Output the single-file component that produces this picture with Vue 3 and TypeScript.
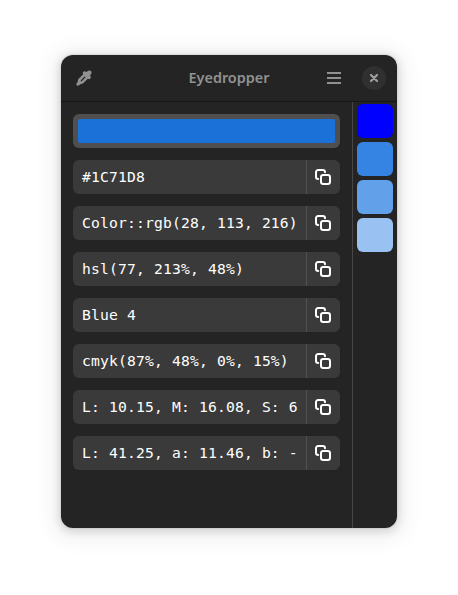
<script setup lang="ts">
interface ColorFormat {
  id: string
  value: string
}

const formats: ColorFormat[] = [
  { id: 'hex', value: '#1C71D8' },
  { id: 'rgb', value: 'Color::rgb(28, 113, 216)' },
  { id: 'hsl', value: 'hsl(77, 213%, 48%)' },
  { id: 'name', value: 'Blue 4' },
  { id: 'cmyk', value: 'cmyk(87%, 48%, 0%, 15%)' },
  { id: 'lms', value: 'L: 10.15, M: 16.08, S: 6' },
  { id: 'hunter', value: 'L: 41.25, a: 11.46, b: -' },
]

const history: string[] = ['#0000ff', '#3584e4', '#62a0ea', '#99c1f1']
</script>

<template>
  <main class="desktop">
    <section class="window">
      <header class="headerbar">
        <button class="flat pick" aria-label="Pick a color">
          <svg width="16" height="16" viewBox="0 0 16 16">
            <path
              class="fill"
              fill-rule="evenodd"
              d="M10.8 1.7C12 .3 13.9 0 15 1C16 2.1 15.7 3.9 14.4 5.1L13.9 5.6C15 6.6 15.1 7.8 14.3 8.6C13.6 9.3 12.6 9.3 11.8 8.8L7.5 13.1C6.6 14 5.5 14.3 4.3 14.2L3.1 15.3C2.4 15.9 1.4 15.9 .8 15.2C.1 14.6 .1 13.6 .8 12.9L1.8 11.9C1.7 10.5 2 9.4 2.9 8.5L7.2 4.2C6.6 3.4 6.7 2.4 7.4 1.7C8.2 1 9.3 1.1 10.3 2.1ZM8.6 6.5L5.2 9.9C4.6 10.5 4.5 11 4.8 11.2C5.1 11.4 5.6 11.3 6.1 10.8L9.6 7.3Z"
            />
          </svg>
        </button>
        <h1 class="title">Eyedropper</h1>
        <div class="controls">
          <button class="flat" aria-label="Main menu">
            <svg width="16" height="16" viewBox="0 0 16 16">
              <path class="fill" d="M1 2h14v2H1zM1 7h14v2H1zM1 12h14v2H1z" />
            </svg>
          </button>
          <button class="close" aria-label="Close">
            <svg width="16" height="16" viewBox="0 0 16 16">
              <path class="cross" d="M5 5l6 6M11 5l-6 6" />
            </svg>
          </button>
        </div>
      </header>
      <div class="body">
        <div class="content">
          <button class="current" aria-label="Current color"><span class="fillcolor"></span></button>
          <div v-for="format in formats" :key="format.id" class="entry">
            <span class="value">{{ format.value }}</span>
            <button class="copy" aria-label="Copy">
              <svg width="16" height="16" viewBox="0 0 16 16">
                <path d="M3.2 10A2.2 2.2 0 0 1 1 7.8V3.2A2.2 2.2 0 0 1 3.2 1h4.6A2.2 2.2 0 0 1 10 3.2" />
                <rect x="6" y="6" width="9" height="9" rx="2.2" />
              </svg>
            </button>
          </div>
        </div>
        <aside class="history">
          <button
            v-for="color in history"
            :key="color"
            class="swatch"
            :style="{ backgroundColor: color }"
            :aria-label="color"
          ></button>
        </aside>
      </div>
    </section>
  </main>
</template>

<style>
body {
  background: #fff;
}
</style>

<style scoped>
.desktop {
  box-sizing: border-box;
  height: 595px;
  padding: 55px 61px 67px;
  overflow: hidden;
}

.window {
  display: flex;
  flex-direction: column;
  height: 473px;
  border-radius: 12px;
  overflow: hidden;
  background: #242424;
  box-shadow:
    0 2px 8px 2px rgba(0, 0, 0, 0.13),
    0 3px 20px 10px rgba(0, 0, 0, 0.05),
    0 0 0 1px rgba(0, 0, 0, 0.05);
}

button {
  display: flex;
  align-items: center;
  justify-content: center;
  padding: 0;
  border: 0;
  background: none;
}

svg {
  display: block;
}

.headerbar {
  display: grid;
  grid-template-columns: 1fr auto 1fr;
  align-items: center;
  box-sizing: border-box;
  height: 47px;
  padding: 0 11px 0 6px;
  border-bottom: 1px solid #171717;
}

.flat {
  width: 34px;
  height: 34px;
}

.title {
  margin: 0 0 0 5px;
  color: #919191;
  font: 600 14.4px/20px 'Noto Sans', sans-serif;
}

.controls {
  display: flex;
  align-items: center;
  justify-content: flex-end;
  gap: 11px;
}

.close {
  width: 24px;
  height: 24px;
  border-radius: 50%;
  background: #303030;
}

.fill {
  fill: #919191;
}

.cross {
  fill: none;
  stroke: #a0a0a0;
  stroke-width: 2.2;
  stroke-linecap: round;
}

.body {
  display: flex;
  flex: 1;
}

.content {
  display: flex;
  flex: 1;
  flex-direction: column;
  gap: 12px;
  min-width: 0;
  padding: 12px;
}

.current {
  box-sizing: border-box;
  height: 34px;
  padding: 5px;
  border-radius: 6px;
  background: #4f4f4f;
}

.fillcolor {
  width: 100%;
  height: 100%;
  border-radius: 2px;
  background: #1c71d8;
}

.entry {
  display: flex;
  height: 34px;
  border-radius: 6px;
  overflow: hidden;
  background: #3a3a3a;
}

.value {
  flex: 1;
  min-width: 0;
  padding-left: 9px;
  overflow: hidden;
  color: #fff;
  font: 14.667px/34px 'DejaVu Sans Mono', monospace;
  letter-spacing: 0.17px;
  white-space: pre;
}

.copy {
  box-sizing: border-box;
  width: 34px;
  padding-right: 1px;
  border-left: 1px solid #505050;
}

.copy svg {
  fill: none;
  stroke: #fff;
  stroke-width: 2;
  stroke-linecap: round;
}

.history {
  display: flex;
  flex-direction: column;
  gap: 4px;
  padding: 2px 4px;
  border-left: 1px solid #474747;
}

.swatch {
  width: 36px;
  height: 34px;
  border-radius: 6px;
}
</style>
